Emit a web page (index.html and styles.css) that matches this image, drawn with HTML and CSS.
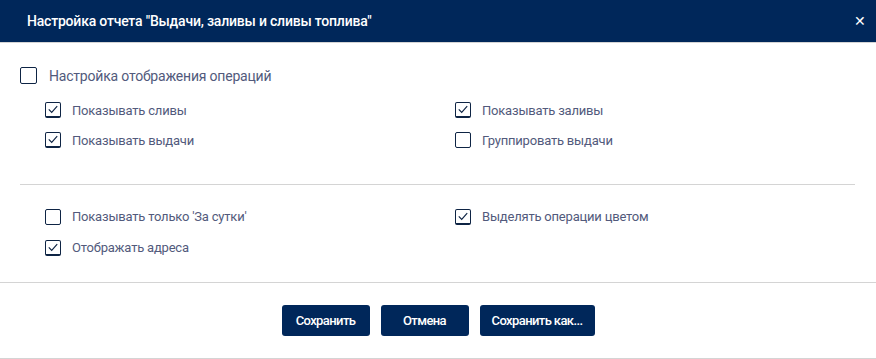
FILE: index.html
```html
<!DOCTYPE html>
<html lang="ru">
<head>
  <meta charset="UTF-8">
  <title>Настройка отчета</title>
  <link rel="stylesheet" href="styles.css">
</head>
<body>
  <div class="dialog">
    <header class="dialog-head">
      <h1>Настройка отчета "Выдачи, заливы и сливы топлива"</h1>
      <button class="close">&#10005;</button>
    </header>
    <div class="dialog-body">
      <label class="check main">
        <span class="box"></span>
        Настройка отображения операций
      </label>
      <div class="options">
        <label class="check"><span class="box on"><svg viewBox="0 0 16 16"><path d="M2.8 7.8 L6.4 11.6 L13.2 3.8"/></svg></span>Показывать сливы</label>
        <label class="check"><span class="box on"><svg viewBox="0 0 16 16"><path d="M2.8 7.8 L6.4 11.6 L13.2 3.8"/></svg></span>Показывать заливы</label>
        <label class="check"><span class="box on"><svg viewBox="0 0 16 16"><path d="M2.8 7.8 L6.4 11.6 L13.2 3.8"/></svg></span>Показывать выдачи</label>
        <label class="check"><span class="box"></span>Группировать выдачи</label>
      </div>
      <hr class="divider">
      <div class="options lower">
        <label class="check"><span class="box"></span>Показывать только 'За сутки'</label>
        <label class="check"><span class="box on"><svg viewBox="0 0 16 16"><path d="M2.8 7.8 L6.4 11.6 L13.2 3.8"/></svg></span>Выделять операции цветом</label>
        <label class="check"><span class="box on"><svg viewBox="0 0 16 16"><path d="M2.8 7.8 L6.4 11.6 L13.2 3.8"/></svg></span>Отображать адреса</label>
      </div>
    </div>
    <footer class="dialog-foot">
      <button class="btn">Сохранить</button>
      <button class="btn">Отмена</button>
      <button class="btn wide">Сохранить как...</button>
    </footer>
  </div>
</body>
</html>
```

FILE: styles.css
```css
* {
  box-sizing: border-box;
}
body {
  margin: 0;
  font-family: Roboto, "Noto Sans", sans-serif;
  background: #fff;
  color: #525a7c;
}
.dialog {
  width: 876px;
  height: 359px;
}
.dialog-head {
  height: 43px;
  background: #00275a;
  border-bottom: 1px solid #d4d4d4;
  display: flex;
  align-items: center;
  justify-content: space-between;
  padding: 0 9px 0 27px;
}
.dialog-head h1 {
  margin: 0;
  font-size: 14px;
  font-weight: 500;
  color: #fff;
  letter-spacing: -0.2px;
}
.close {
  background: none;
  border: none;
  color: #fff;
  font-size: 14px;
  line-height: 1;
  padding: 0;
  width: 14px;
  cursor: pointer;
}
.dialog-body {
  padding: 24px 21px 19px 20px;
  border-bottom: 1px solid #d4d4d4;
}
.check {
  display: flex;
  align-items: center;
  font-size: 13px;
  height: 30px;
  letter-spacing: -0.2px;
}
.check.main {
  font-size: 14px;
  height: 17px;
}
.box {
  width: 16px;
  height: 16px;
  border: 1.5px solid #0e2444;
  border-radius: 2px;
  margin-right: 11px;
  flex: none;
  display: flex;
}
.box.on {
  border-bottom-width: 2px;
}
.main .box {
  width: 17px;
  height: 17px;
  margin-right: 12px;
}
.box svg {
  width: 100%;
  height: 100%;
}
.box path {
  fill: none;
  stroke: #0e2444;
  stroke-width: 1.4;
}
.options {
  display: grid;
  grid-template-columns: 410px 1fr;
  padding-left: 25px;
  margin-top: 11px;
}
.divider {
  border: none;
  border-top: 1px solid #d4d4d4;
  margin: 29px 0 0;
  width: 835px;
}
.options.lower {
  margin-top: 16px;
}
.options.lower .check {
  height: 31px;
}
.dialog-foot {
  display: flex;
  justify-content: center;
  gap: 11px;
  padding: 22px 0;
  border-bottom: 1px solid #d4d4d4;
}
.btn {
  height: 31px;
  width: 88px;
  padding: 0;
  background: #00275a;
  color: #fff;
  border: none;
  border-radius: 3px;
  font-family: Roboto, sans-serif;
  font-size: 13px;
  font-weight: 500;
  letter-spacing: -0.6px;
}
.btn.wide {
  width: 115px;
}
```
